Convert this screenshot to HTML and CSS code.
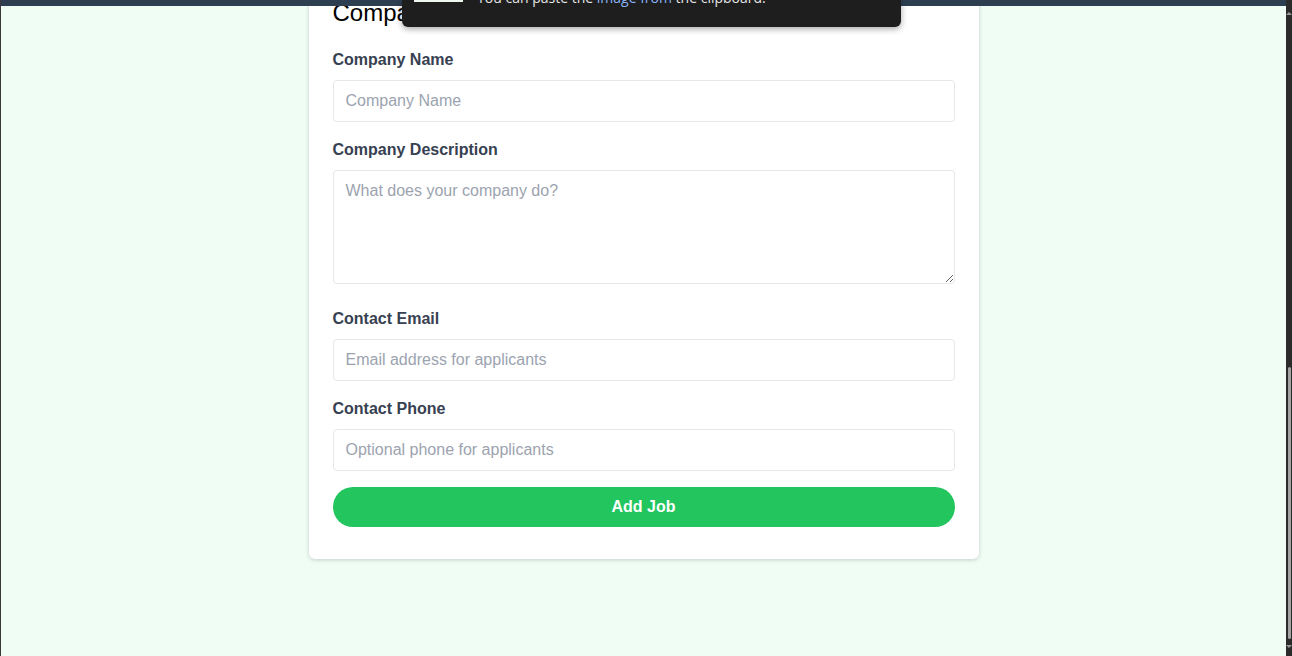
FILE: index.html
```html
<!DOCTYPE html>
<html lang="en">
<head>
<meta charset="utf-8">
<title>Add Job</title>
<link rel="stylesheet" href="styles.css">
</head>
<body>
<div class="frame">
  <div class="edge"></div>
  <div class="viewport">
    <div class="topbar"></div>
    <div class="toast">
      <div class="toast-thumb"></div>
      <div class="toast-text">You can paste the <span class="link">image from</span> the clipboard.</div>
    </div>
    <form class="card">
      <h2 class="card-title">Company Information</h2>
      <div class="field">
        <label class="label">Company Name</label>
        <input class="input" type="text" placeholder="Company Name">
      </div>
      <div class="field field-wide">
        <label class="label">Company Description</label>
        <textarea class="input textarea" placeholder="What does your company do?"></textarea>
      </div>
      <div class="field">
        <label class="label">Contact Email</label>
        <input class="input" type="email" placeholder="Email address for applicants">
      </div>
      <div class="field">
        <label class="label">Contact Phone</label>
        <input class="input" type="tel" placeholder="Optional phone for applicants">
      </div>
      <button class="submit" type="button">Add Job</button>
    </form>
  </div>
  <div class="scrollbar">
    <div class="arrow arrow-up"></div>
    <div class="track-space"></div>
    <div class="thumb"></div>
    <div class="arrow arrow-down"></div>
  </div>
</div>
</body>
</html>
```

FILE: styles.css
```css
* { box-sizing: border-box; }
html, body {
  margin: 0;
  height: 656px;
  overflow: hidden;
}
body {
  font-family: "Liberation Sans", Arial, sans-serif;
}
.frame {
  display: flex;
  height: 656px;
}
.edge {
  width: 1px;
  background: #3a3a3a;
}
.viewport {
  flex: 1;
  position: relative;
  background: #f0fdf4;
  overflow: hidden;
}
.topbar {
  position: absolute;
  top: 0;
  left: 0;
  right: 0;
  height: 6px;
  background: #2c3e50;
  z-index: 5;
}
.toast {
  position: absolute;
  top: 0;
  left: 401px;
  width: 499px;
  height: 27px;
  background: #1e1e1e;
  border-radius: 0 0 6px 6px;
  box-shadow: 0 2px 6px rgba(0,0,0,0.35);
  z-index: 10;
  display: flex;
  align-items: flex-start;
  overflow: hidden;
}
.toast-thumb {
  margin-left: 12px;
  width: 49px;
  height: 2px;
  background: #eef6f0;
}
.toast-text {
  margin-left: 14px;
  margin-top: -12px;
  font-family: "Open Sans", "Noto Sans", sans-serif;
  font-size: 14px;
  line-height: 20px;
  color: #e6e6e6;
  white-space: nowrap;
}
.link { color: #8ab4f8; }

.card {
  width: 670px;
  margin: -27px auto 0;
  background: #fff;
  border-radius: 6px;
  box-shadow: 0 1px 4px rgba(0,0,0,0.18);
  padding: 24px 24px 32px;
}
.card-title {
  margin: 0 0 19px;
  font-size: 24px;
  line-height: 32px;
  font-weight: 400;
  color: #000;
}
.field { margin-bottom: 16px; }
.field-wide { margin-bottom: 23px; }
.label {
  display: block;
  font-size: 16px;
  line-height: 24px;
  font-weight: 700;
  color: #374151;
  margin-bottom: 8px;
}
.input {
  display: block;
  width: 100%;
  height: 42px;
  padding: 8px 12px;
  border: 1px solid #e5e7eb;
  border-radius: 4px;
  font-family: "Liberation Sans", Arial, sans-serif;
  font-size: 16px;
  line-height: 24px;
  color: #111827;
  background: #fff;
  outline: none;
}
.input::placeholder { color: #9ca3af; }
.textarea {
  height: 114px;
  resize: vertical;
}
.submit {
  display: block;
  width: 100%;
  height: 40px;
  border: none;
  border-radius: 20px;
  background: #22c55e;
  color: #fff;
  font-family: "Liberation Sans", Arial, sans-serif;
  font-size: 16px;
  font-weight: 700;
}

.scrollbar {
  width: 6px;
  background: #2b2b2b;
  display: flex;
  flex-direction: column;
  align-items: center;
}
.arrow {
  width: 0;
  height: 0;
  border-left: 3px solid transparent;
  border-right: 3px solid transparent;
}
.arrow-up {
  margin-top: 12px;
  border-bottom: 3px solid #9a9a9a;
}
.arrow-down {
  margin-top: 6px;
  margin-bottom: 8px;
  border-top: 3px solid #9a9a9a;
}
.track-space { flex: 1; }
.thumb {
  width: 3px;
  height: 272px;
  margin-left: 1px;
  background: #a3a3a3;
  border-radius: 2px;
}
```
